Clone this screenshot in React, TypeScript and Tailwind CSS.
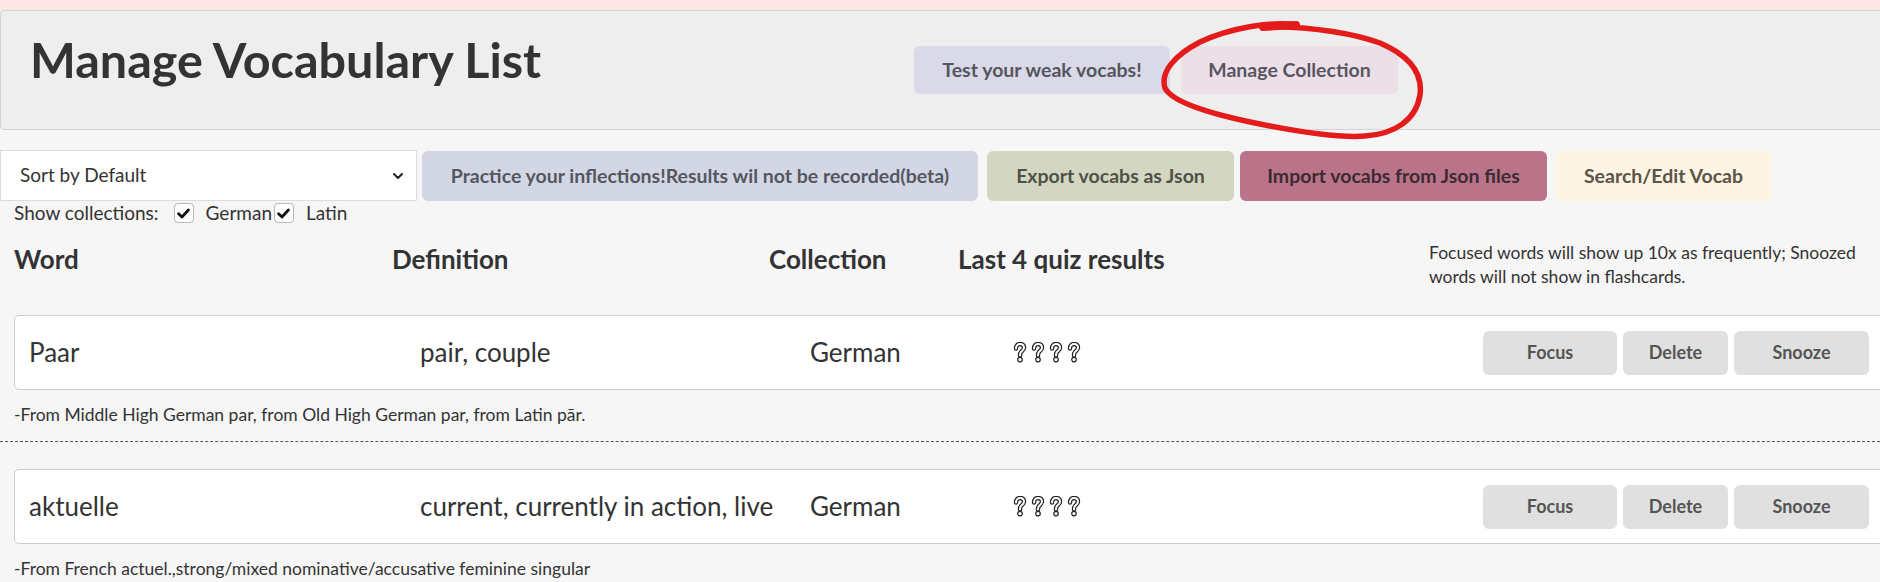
import React from "react";

function Check() {
  return (
    <span className="flex h-[20px] w-[20px] flex-none items-center justify-center rounded-[4px] border border-[#b8b8b8] bg-white">
      <svg width="13" height="11" viewBox="0 0 12 10">
        <path d="M1.5 5.2 L4.6 8.2 L10.5 1.8" fill="none" stroke="#111" strokeWidth="2.6" strokeLinecap="round" strokeLinejoin="round" />
      </svg>
    </span>
  );
}

function Q() {
  return (
    <svg width="14" height="21" viewBox="0 0 14 21" className="flex-none">
      <path d="M3 6.5 C3 3.5 5 2 7 2 C9.5 2 11 3.5 11 5.8 C11 8 9 9 8 10 C7 11 7 12 7 13.5" fill="none" stroke="#222" strokeWidth="4.4" strokeLinecap="round" strokeLinejoin="round" />
      <path d="M3 6.5 C3 3.5 5 2 7 2 C9.5 2 11 3.5 11 5.8 C11 8 9 9 8 10 C7 11 7 12 7 13.5" fill="none" stroke="#fff" strokeWidth="2" strokeLinecap="round" strokeLinejoin="round" />
      <circle cx="7" cy="17.6" r="2.3" fill="#fff" stroke="#222" strokeWidth="1.2" />
    </svg>
  );
}

function Entry({ word, def, ety, first }: { word: string; def: string; ety: string; first?: boolean }) {
  return (
    <div className={first ? "pb-[14px] border-b border-dashed border-[#555]" : "pt-[27px]"}>
      <div className="ml-[14px] flex h-[75px] w-[1900px] items-center rounded-[5px] border border-[#cccccc] bg-white text-[26px] text-[#333]">
        <div className="w-[405px] flex-none pl-[14px]">{word}</div>
        <div className="w-[390px] flex-none">{def}</div>
        <div className="w-[203px] flex-none">German</div>
        <div className="flex w-[470px] flex-none gap-[4px]">
          <Q />
          <Q />
          <Q />
          <Q />
        </div>
        <div className="flex gap-[6px] text-[18px] font-bold text-[#555]">
          <div className="flex h-[44px] w-[134px] items-center justify-center rounded-[6px] bg-[#e0e0e0]">Focus</div>
          <div className="flex h-[44px] w-[105px] items-center justify-center rounded-[6px] bg-[#e0e0e0]">Delete</div>
          <div className="flex h-[44px] w-[135px] items-center justify-center rounded-[6px] bg-[#e0e0e0]">Snooze</div>
        </div>
      </div>
      <div className="mt-[13px] pl-[14px] text-[17.5px] leading-[24px] text-[#333]">{ety}</div>
    </div>
  );
}

export default function App() {
  return (
    <div className="relative h-[582px] w-[1880px] overflow-hidden bg-[#f6f6f6] font-['Lato',sans-serif] text-[#333]">
      <div className="h-[10px] bg-[#fce6e6]" />
      <div className="flex h-[120px] w-[1885px] items-start rounded-l-[4px] border border-[#d4d4d4] bg-[#eeeeee]">
        <div className="w-[913px] flex-none pl-[29px] pt-[18px]">
          <h1 className="text-[48.5px] font-bold leading-[60px] text-[#333]">Manage Vocabulary List</h1>
        </div>
        <div className="mt-[35px] flex gap-[11px] text-[19.5px] font-bold">
          <div className="flex h-[48px] w-[256px] items-center justify-center rounded-[6px] bg-[#d9d9e7] text-[#55555f]">Test your weak vocabs!</div>
          <div className="flex h-[48px] w-[217px] items-center justify-center rounded-[6px] bg-[#ebe0e8] text-[#5a5560]">Manage Collection</div>
        </div>
      </div>

      <div className="mt-[20px] flex items-start">
        <div className="flex h-[51px] w-[417px] flex-none items-center justify-between border border-[#dddddd] bg-white pl-[19px] pr-[12px] text-[19px] text-[#333]">
          <span>Sort by Default</span>
          <svg width="12" height="8" viewBox="0 0 12 8">
            <path d="M2 2 L6 6 L10 2" fill="none" stroke="#222" strokeWidth="2" strokeLinecap="round" strokeLinejoin="round" />
          </svg>
        </div>
        <div className="mt-[1px] flex text-[19.5px] font-bold">
          <div className="ml-[5px] flex h-[50px] w-[556px] items-center justify-center rounded-[6px] bg-[#d3d6e4] text-[#55575f]">Practice your inflections!Results wil not be recorded(beta)</div>
          <div className="ml-[9px] flex h-[50px] w-[247px] items-center justify-center rounded-[6px] bg-[#d3d7c1] text-[#4f5148]">Export vocabs as Json</div>
          <div className="ml-[6px] flex h-[50px] w-[307px] items-center justify-center rounded-[6px] bg-[#b97489] text-[#3d2a33]">Import vocabs from Json files</div>
          <div className="ml-[9px] flex h-[50px] w-[215px] items-center justify-center rounded-[6px] bg-[#fdf4e3] text-[#5b5448]">Search/Edit Vocab</div>
        </div>
      </div>

      <div className="flex h-[24px] items-center pl-[14px] text-[19px] text-[#333]">
        <span>Show collections:</span>
        <span className="ml-[15px]"><Check /></span>
        <span className="ml-[12px]">German</span>
        <span className="ml-[2px]"><Check /></span>
        <span className="ml-[12px]">Latin</span>
      </div>

      <div className="mt-[16px] flex items-start pl-[14px]">
        <div className="w-[378px] flex-none text-[26px] font-bold leading-[36px]">Word</div>
        <div className="w-[377px] flex-none text-[26px] font-bold leading-[36px]">Definition</div>
        <div className="w-[189px] flex-none text-[26px] font-bold leading-[36px]">Collection</div>
        <div className="w-[471px] flex-none text-[26px] font-bold leading-[36px]">Last 4 quiz results</div>
        <div className="w-[440px] flex-none text-[17.5px] leading-[24px]">Focused words will show up 10x as frequently; Snoozed words will not show in flashcards.</div>
      </div>

      <div className="mt-[26px]">
        <Entry first word="Paar" def="pair, couple" ety="-From Middle High German par, from Old High German par, from Latin pār." />
        <Entry word="aktuelle" def="current, currently in action, live" ety="-From French actuel.,strong/mixed nominative/accusative feminine singular" />
      </div>

      <svg className="pointer-events-none absolute left-[1150px] top-[10px]" width="290" height="130" viewBox="0 0 290 130">
        <path
          d="M147 15 C120 11 80 18 50 32 C25 45 10 62 15 78 C22 92 60 104 110 114 C150 122 190 128 215 126 C245 124 266 110 270 85 C273 62 258 45 230 33 C200 22 160 17 113 16"
          fill="none"
          stroke="#e41b1b"
          strokeWidth="5.5"
          strokeLinecap="round"
          strokeLinejoin="round"
        />
        <path d="M113 17 L146 15" stroke="#e41b1b" strokeWidth="8" strokeLinecap="round" />
      </svg>
    </div>
  );
}
